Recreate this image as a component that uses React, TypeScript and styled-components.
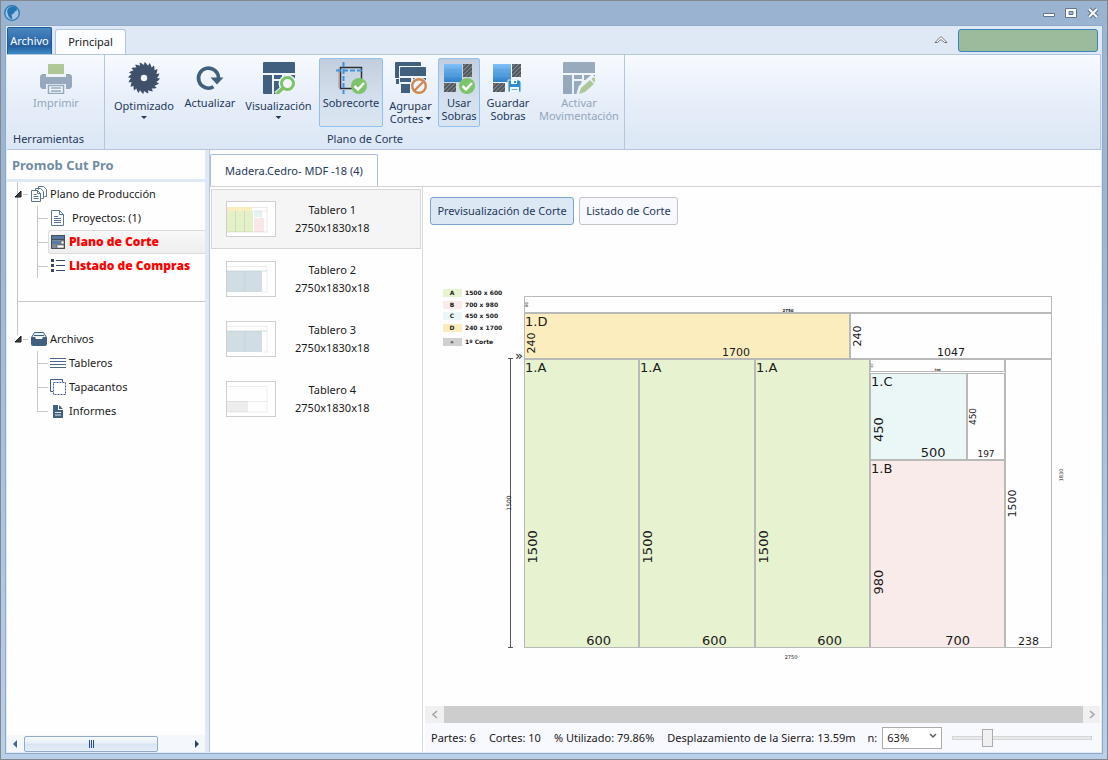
import React from "react";
import styled, { createGlobalStyle, css } from "styled-components";

const GlobalStyle = createGlobalStyle`
  *, *::before, *::after { box-sizing: border-box; }
  body { margin: 0; }
  button, select, input { font: inherit; color: inherit; margin: 0; }
  ul { list-style: none; margin: 0; padding: 0; }
`;

const slate = "#41607f";
const ink = "#1e395b";

/* ---------- window frame ---------- */

const Window = styled.div`
  display: flex;
  flex-direction: column;
  height: 100vh;
  min-height: 480px;
  padding: 0 4px 5px;
  border: 1px solid #828790;
  background: linear-gradient(#9ab3d1, #9db6d4 30%, #bad0e9);
  font-family: "Noto Sans", "Open Sans", sans-serif;
  font-size: 11px;
  line-height: 16px;
  color: #1a1a1a;
`;

const TitleBar = styled.header`
  display: flex;
  align-items: center;
  justify-content: space-between;
  flex: none;
  height: 24px;
  padding: 0 2px 0 0;
`;

const Logo = styled.svg`
  width: 20px;
  height: 20px;
  margin-left: -3px;
`;

const WindowControls = styled.div`
  display: flex;
  gap: 6px;
`;

const PlainButton = styled.button`
  display: flex;
  align-items: center;
  justify-content: center;
  padding: 0;
  border: 0;
  background: none;
`;

const Client = styled.div`
  display: flex;
  flex-direction: column;
  flex: 1;
  min-height: 0;
  padding: 0 1px 1px;
  border: 1px solid #8fa9c9;
  background: #dfe8f5;
`;

/* ---------- ribbon ---------- */

const RibbonTabs = styled.nav`
  display: flex;
  align-items: flex-end;
  flex: none;
  height: 28px;
  padding-right: 3px;
`;

const FileTab = styled.button`
  width: 45px;
  height: 27px;
  padding: 0;
  border: 1px solid #1f5a99;
  border-bottom: 0;
  border-radius: 2px 2px 0 0;
  background: linear-gradient(#4a87c0, #2f6bab 50%, #2560a0 70%, #3d8cc8);
  color: #fff;
`;

const RibbonTab = styled.button`
  width: 71px;
  height: 25px;
  margin: 0 auto 0 3px;
  padding: 0;
  border: 1px solid #b4c6de;
  border-bottom: 0;
  border-radius: 3px 3px 0 0;
  background: #fcfdff;
`;

const CollapseButton = styled(PlainButton)`
  align-self: center;
`;

const StatusBadge = styled.div`
  width: 140px;
  height: 23px;
  margin: 0 0 2px 10px;
  border: 1px solid #3c82bd;
  border-radius: 3px;
  background: #9abc9c;
`;

const Ribbon = styled.section`
  display: flex;
  flex: none;
  height: 96px;
  border: 1px solid #b4c6de;
  border-left: 0;
  background: linear-gradient(#f7faff, #e5edf8 55%, #dce7f5);
`;

const RibbonGroup = styled.div<{ $width: number }>`
  display: flex;
  flex-direction: column;
  justify-content: space-between;
  width: ${(p) => p.$width}px;
  padding: 3px 2px 2px 3px;
  border-right: 1px solid #b4c6de;
`;

const RibbonRow = styled.div`
  display: flex;
  gap: 2px;
`;

const GroupTitle = styled.div<{ $align?: string }>`
  padding: 0 3px;
  text-align: ${(p) => p.$align ?? "center"};
  color: ${ink};
`;

const RibbonButton = styled.button<{ $width: number; $active?: boolean; $split?: boolean }>`
  display: flex;
  flex-direction: column;
  align-items: center;
  gap: ${(p) => (p.$split ? 5 : 2)}px;
  width: ${(p) => p.$width}px;
  height: 69px;
  padding: 3px 0 0;
  border: 1px solid transparent;
  border-radius: 2px;
  background: none;
  line-height: 13px;
  white-space: nowrap;
  color: ${ink};
  ${(p) =>
    p.$active &&
    css`
      border-color: #90c0ee;
      background: linear-gradient(#c2cedd, #d5e0ee 60%, #dae5f2);
    `}
  &:disabled {
    color: #93a6ba;
  }
  &:disabled svg {
    opacity: 0.5;
  }
`;

const ButtonText = styled.span`
  display: flex;
  flex-direction: column;
  align-items: center;
`;

const Caret = styled.i<{ $inline?: boolean }>`
  display: inline-block;
  width: 6px;
  height: 3px;
  margin: ${(p) => (p.$inline ? "0 0 3px 2px" : "4px 0 0")};
  background: ${ink};
  clip-path: polygon(0 0, 100% 0, 50% 100%);
`;

/* ---------- sidebar ---------- */

const Body = styled.div`
  display: flex;
  flex: 1;
  min-height: 0;
  gap: 4px;
`;

const Sidebar = styled.aside`
  display: flex;
  flex-direction: column;
  flex: none;
  width: 198px;
  background: #fefefe;
`;

const SidebarTitle = styled.h1`
  margin: 0;
  padding: 6px 0 5px 5px;
  border-bottom: 3px solid #dfe8f5;
  font-size: 13px;
  line-height: 18px;
  font-weight: 700;
  color: #708ca3;
`;

const Tree = styled.div`
  flex: 1;
  padding-left: 10px;
`;

const TreeSection = styled.section<{ $ruled?: boolean }>`
  ${(p) =>
    p.$ruled
      ? css`
          border-left: 1px solid #c8c8c8;
          border-bottom: 1px solid #c8c8c8;
          padding-bottom: 23px;
        `
      : css`
          padding: 25px 0 0 1px;
          background: linear-gradient(#c8c8c8, #c8c8c8) 0 0 / 1px 33px no-repeat;
        `}
`;

const TreeRoot = styled.button`
  display: flex;
  align-items: center;
  gap: 3px;
  height: 24px;
  margin-left: -4px;
  padding: 0;
  border: 0;
  background: none;
`;

const RootTick = styled.i`
  width: 5px;
  height: 1px;
  background: #c8c8c8;
  margin-left: -2px;
`;

const Branch = styled.ul<{ $last?: boolean }>`
  margin-left: 19px;
  background: linear-gradient(#c8c8c8, #c8c8c8) 0 0 / 1px ${(p) => (p.$last ? "calc(100% - 12px)" : "100%")} no-repeat;
`;

const Leaf = styled.li`
  display: flex;
  align-items: center;
  height: 24px;
  &::before {
    content: "";
    width: 11px;
    height: 1px;
    background: #c8c8c8;
  }
`;

const LeafButton = styled.button<{ $selected?: boolean; $alert?: boolean; $wide?: boolean }>`
  display: flex;
  flex: 1;
  align-items: center;
  gap: ${(p) => (p.$wide ? 6 : 3)}px;
  height: 24px;
  padding: 0 0 0 1px;
  border: 1px solid ${(p) => (p.$selected ? "#dcdcdc" : "transparent")};
  border-right: 0;
  border-radius: 3px 0 0 3px;
  background: ${(p) => (p.$selected ? "linear-gradient(#f8f8f8, #eeeeee)" : "none")};
  white-space: nowrap;
  ${(p) =>
    p.$alert &&
    css`
      color: #ff0000;
      font-family: "Open Sans", sans-serif;
      font-size: 12px;
      font-weight: 800;
    `}
`;

const SideScroll = styled.div`
  display: flex;
  align-items: center;
  height: 17px;
  padding: 0 3px;
  background: #f4f8fd;
`;

const SideScrollThumb = styled.div`
  display: flex;
  align-items: center;
  justify-content: center;
  gap: 1px;
  width: 134px;
  height: 16px;
  margin: 0 auto 0 3px;
  border: 1px solid #93a9c8;
  border-radius: 2px;
  background: linear-gradient(#f7fafe, #e6eef8 45%, #d8e4f2 50%, #e4edf8);
  i {
    width: 1px;
    height: 8px;
    background: #274b84;
  }
`;

/* ---------- main area ---------- */

const Main = styled.main`
  display: flex;
  flex-direction: column;
  flex: 1;
  min-width: 0;
  border-left: 1px solid #b9c7dc;
  background: #fefefe;
`;

const MaterialTabs = styled.div`
  display: flex;
  flex: none;
  height: 37px;
  padding-top: 4px;
  border-bottom: 1px solid #d2d2d2;
`;

const MaterialTab = styled.button`
  width: 168px;
  height: 32px;
  padding: 0;
  border: 1px solid #a9bdda;
  border-bottom: 0;
  border-radius: 2px 2px 0 0;
  background: #fefefe;
  color: ${ink};
`;

const Split = styled.div`
  display: flex;
  flex: 1;
  min-height: 0;
`;

const BoardList = styled.ul`
  flex: none;
  width: 213px;
  padding: 2px 1px 0;
  border-right: 1px solid #dadada;
`;

const BoardCard = styled.button<{ $selected?: boolean }>`
  display: flex;
  align-items: center;
  gap: 19px;
  width: 100%;
  height: 60px;
  padding: 0 0 0 14px;
  border: 1px solid ${(p) => (p.$selected ? "#d6d6d6" : "transparent")};
  background: ${(p) => (p.$selected ? "#f5f5f5" : "none")};
  line-height: 18px;
`;

const Thumb = styled.svg`
  width: 50px;
  height: 36px;
  border: 1px solid #cfcfcf;
  background: #fefefe;
`;

const Viewer = styled.section`
  display: flex;
  flex-direction: column;
  flex: 1;
  min-width: 0;
  padding-right: 1px;
`;

const ViewToggle = styled.div`
  display: flex;
  gap: 5px;
  flex: none;
  padding: 10px 7px 0;
`;

const ToggleButton = styled.button<{ $active?: boolean; $width: number }>`
  width: ${(p) => p.$width}px;
  height: 28px;
  padding: 0;
  border: 1px solid ${(p) => (p.$active ? "#7ba2d0" : "#c3c3c8")};
  border-radius: 3px;
  background: ${(p) => (p.$active ? "#dde8f5" : "#f8f8ff")};
  white-space: nowrap;
  color: ${ink};
`;

const Canvas = styled.div`
  flex: 1;
  min-height: 0;
  overflow: hidden;
  padding: 55px 0 0 12px;
  svg {
    display: block;
    font-family: "DejaVu Sans", sans-serif;
  }
`;

const ViewScroll = styled.div`
  display: flex;
  flex: none;
  height: 17px;
  margin-left: 2px;
  background: #cdcdcd;
`;

const ViewScrollArrow = styled(PlainButton)<{ $end?: boolean }>`
  width: ${(p) => (p.$end ? 17 : 19)}px;
  margin-left: ${(p) => (p.$end ? "auto" : "0")};
  background: #f0f0f0;
`;

const StatusBar = styled.footer`
  display: flex;
  align-items: center;
  flex: none;
  height: 29px;
  margin-left: 2px;
  padding: 0 8px 0 6px;
  background: #f8f8ff;
  white-space: nowrap;
`;

const Stats = styled.div`
  display: flex;
  flex: none;
  gap: 13px;
`;

const ZoomLabel = styled.label`
  margin: 0 5px 0 12px;
`;

const SelectBox = styled.div`
  display: grid;
  flex: none;
  width: 60px;
  height: 22px;
  > * {
    grid-area: 1 / 1;
  }
  svg {
    align-self: center;
    justify-self: end;
    margin: 0 5px 3px 0;
    pointer-events: none;
  }
`;

const ZoomSelect = styled.select`
  appearance: none;
  width: 100%;
  height: 100%;
  padding: 0 4px;
  border: 1px solid #acacac;
  border-radius: 0;
  background: #fff;
`;

const ZoomRange = styled.input`
  appearance: none;
  flex: 1;
  min-width: 60px;
  height: 18px;
  margin-left: 10px;
  background: none;
  &::-webkit-slider-runnable-track {
    height: 4px;
    border: 1px solid #d6d6d6;
    background: #e7eaea;
  }
  &::-webkit-slider-thumb {
    appearance: none;
    width: 11px;
    height: 18px;
    margin-top: -8px;
    border: 1px solid #acacac;
    background: #f0f0f0;
  }
`;

/* ---------- icons ---------- */

const Icon32 = ({ children }: { children: React.ReactNode }) => (
  <svg width="32" height="32" viewBox="0 0 32 32" aria-hidden="true">
    {children}
  </svg>
);

const PrinterIcon = () => (
  <Icon32>
    <path d="M8 2h16v10H8z" fill="#6f9a2e" />
    <path d="M2 12h4v3h20v-3h4l2 2v11l-2 2h-4v-5H6v5H2l-2-2V14z" fill={slate} />
    <path d="M8.500 23.500h15v8h-15z" fill="#fff" stroke={slate} strokeWidth="1.500" />
    <path d="M11 26h10M11 29h10" stroke={slate} strokeWidth="1.500" />
  </Icon32>
);

const sawTeeth = Array.from({ length: 20 }, (_, i) => {
  const at = (deg: number, r: number) => {
    const a = (deg * Math.PI) / 180;
    return `${(16 + r * Math.cos(a)).toFixed(2)},${(16 + r * Math.sin(a)).toFixed(2)}`;
  };
  return `${at(i * 18, 13)} ${at(i * 18 + 2, 16)} ${at(i * 18 + 8, 15)}`;
}).join(" ");

const SawIcon = () => (
  <Icon32>
    <polygon points={sawTeeth} fill="#3f506b" />
    <circle cx="16" cy="16" r="3.200" fill="#f2f6fc" />
  </Icon32>
);

const RefreshIcon = () => (
  <Icon32>
    <path d="M19.500 24.800A10 10 0 1 1 24.500 16" fill="none" stroke={slate} strokeWidth="3.600" />
    <path d="M16.500 15.500h13L23 22.500z" fill={slate} />
  </Icon32>
);

const PanelsShape = () => (
  <path d="M0 1q0-1 1-1h30q1 0 1 1v10H0zM0 13h9v19H1q-1 0-1-1zM11 13h8v4h-8zM21 13h11v5H21zM11 19h8l-2 5v8h-6z" fill={slate} />
);

const VisualIcon = () => (
  <Icon32>
    <PanelsShape />
    <circle cx="24.500" cy="21.500" r="6" fill="#eef4fb" stroke="#eef4fb" strokeWidth="6" />
    <path d="M20 26l-7 6" stroke="#eef4fb" strokeWidth="5" />
    <circle cx="24.500" cy="21.500" r="6" fill="#f2f6fc" stroke="#7dc369" strokeWidth="3" />
    <path d="M20 26l-6.500 6" stroke="#7dc369" strokeWidth="3.500" />
  </Icon32>
);

const Check = () => (
  <>
    <circle cx="24" cy="24" r="8" fill="#7dc369" />
    <path d="M19.500 24l3.500 3.500 6-6.500" fill="none" stroke="#fff" strokeWidth="2.500" />
  </>
);

const OvercutIcon = () => (
  <Icon32>
    <path d="M5.500 5.500h21v21h-21z" fill="none" stroke="#2d3035" strokeWidth="1.500" />
    <path d="M4 6v20" stroke="#b98f95" strokeWidth="1" />
    <path d="M8.500 0v32M1 8.500h28" stroke="#3e92dc" strokeWidth="2" strokeDasharray="5 2" />
    <Check />
  </Icon32>
);

const GroupIcon = () => (
  <Icon32>
    <path d="M0 1q0-1 1-1h24q1 0 1 1v3H4v12H0zM1 17h3v5H1z" fill={slate} />
    <path d="M5 6q0-1 1-1h24q1 0 1 1v8H5zM5 16h11v4H5zM18 16h13v4H18zM6 22h9v9H6z" fill={slate} />
    <circle cx="24" cy="24" r="8" fill="#edf3fb" stroke="#edf3fb" strokeWidth="2" />
    <circle cx="24" cy="24" r="6.800" fill="none" stroke="#cf8752" strokeWidth="2.400" />
    <path d="M19.500 28.500l9-9" stroke="#cf8752" strokeWidth="2.400" />
  </Icon32>
);

const Scrap = ({ id }: { id: string }) => (
  <>
    <defs>
      <linearGradient id={`${id}-blue`} x1="0" y1="0" x2="0" y2="1">
        <stop offset="0" stopColor="#7fc1f8" />
        <stop offset="1" stopColor="#2f80c8" />
      </linearGradient>
      <pattern id={`${id}-hatch`} width="3" height="3" patternUnits="userSpaceOnUse" patternTransform="rotate(45)">
        <rect width="3" height="3" fill="#868b92" />
        <rect width="2" height="3" fill="#50545b" />
      </pattern>
    </defs>
    <rect x="1" y="2" width="18" height="18" fill={`url(#${id}-blue)`} />
    <path d="M1 8h18M1 14h18" stroke="#5aa2e0" strokeWidth=".8" />
    <path d="M20 2h9v13h-9zM1 21h12v9H1z" fill={`url(#${id}-hatch)`} />
  </>
);

const UseScrapIcon = () => (
  <Icon32>
    <Scrap id="use" />
    <Check />
  </Icon32>
);

const SaveScrapIcon = () => (
  <Icon32>
    <Scrap id="save" />
    <path d="M16 18h11l2 2v10H16z" fill="#2f8fd3" stroke="#dfe9f5" />
    <path d="M19 18h6v4h-6zM18 25h9v5h-9z" fill="#f3f8fd" />
    <path d="M22 19h2v2h-2z" fill="#2f8fd3" />
    <path d="M19.500 27.500h6" stroke="#8aa" />
  </Icon32>
);

const MoveIcon = () => (
  <Icon32>
    <PanelsShape />
    <path d="M15 32l2-7L29 14l4 4-12 11z" fill="#edf3fb" stroke="#edf3fb" strokeWidth="3" />
    <path d="M16 32l2-6 9-8 4 4-9 8zM28.500 17l1.500-1.500 2 .5v3.500l-1 1z" fill="#6fa038" />
  </Icon32>
);

const TreeIcon = ({ children }: { children: React.ReactNode }) => (
  <svg width="16" height="16" viewBox="0 0 16 16" aria-hidden="true" fill="none" stroke="#5b7794">
    {children}
  </svg>
);

const Expander = () => (
  <svg width="8" height="8" viewBox="0 0 8 8" aria-hidden="true">
    <path d="M7 1v6H1z" fill="#404040" stroke="#1a1a1a" />
  </svg>
);

const Arrow = ({ d, w, h, fill, stroke }: { d: string; w: number; h: number; fill?: string; stroke?: string }) => (
  <svg width={w} height={h} viewBox={`0 0 ${w} ${h}`} aria-hidden="true">
    <path d={d} fill={fill ?? "none"} stroke={stroke ?? "none"} strokeWidth="1.500" />
  </svg>
);

/* ---------- cutting plan ---------- */

type Part = {
  x: number;
  y: number;
  w: number;
  h: number;
  wide?: string;
  tall?: string;
  size: number;
  name?: string;
  fill?: string;
};

const green = "#e7f2d0";
const pink = "#f9ebe9";
const aqua = "#ebf7f6";
const amber = "#fcedbf";

const parts: Part[] = [
  { x: 89, y: 16, w: 528, h: 17, wide: "2750", tall: "80", size: 4 },
  { x: 89, y: 33, w: 326, h: 46, wide: "1700", tall: "240", size: 11, name: "1.D", fill: amber },
  { x: 415, y: 33, w: 202, h: 46, wide: "1047", tall: "240", size: 11 },
  { x: 89, y: 79, w: 115, h: 289, wide: "600", tall: "1500", size: 13, name: "1.A", fill: green },
  { x: 204, y: 79, w: 116, h: 289, wide: "600", tall: "1500", size: 13, name: "1.A", fill: green },
  { x: 320, y: 79, w: 115, h: 289, wide: "600", tall: "1500", size: 13, name: "1.A", fill: green },
  { x: 435, y: 79, w: 135, h: 13, wide: "700", tall: "60", size: 3 },
  { x: 435, y: 93, w: 97, h: 87, wide: "500", tall: "450", size: 13, name: "1.C", fill: aqua },
  { x: 532, y: 93, w: 38, h: 87, wide: "197", tall: "450", size: 9 },
  { x: 435, y: 180, w: 135, h: 188, wide: "700", tall: "980", size: 13, name: "1.B", fill: pink },
  { x: 570, y: 79, w: 47, h: 289, wide: "238", tall: "1500", size: 11 },
];

const legend = [
  { y: 9, key: "A", text: "1500 x 600", fill: green },
  { y: 21, key: "B", text: "700 x 980", fill: pink },
  { y: 32, key: "C", text: "450 x 500", fill: aqua },
  { y: 44, key: "D", text: "240 x 1700", fill: amber },
  { y: 58, key: "»", text: "1º Corte", fill: "#d0d0d0" },
];

const Upright = ({ x, y, size, children }: { x: number; y: number; size: number; children: React.ReactNode }) => (
  <text transform={`translate(${x} ${y}) rotate(-90)`} fontSize={size} textAnchor="middle">
    {children}
  </text>
);

const CuttingPlan = () => (
  <svg width="650" height="390" viewBox="0 0 650 390" role="img" aria-label="Plano de corte Tablero 1" fill="#1a1a1a">
    {legend.map((l) => (
      <g key={l.key} fontSize="6">
        <rect x="8" y={l.y} width="19" height="8" fill={l.fill} />
        <text x="17" y={l.y + 6} textAnchor="middle" fontWeight="700">
          {l.key}
        </text>
        <text x="30" y={l.y + 6} fontWeight="700">
          {l.text}
        </text>
      </g>
    ))}
    {parts.map((p) => {
      const ratio = p.name ? 0.65 : 0.5;
      return (
        <g key={`${p.x}-${p.y}`}>
          <rect x={p.x + 0.5} y={p.y + 0.5} width={p.w - 1} height={p.h - 1} fill={p.fill ?? "#fefefe"} stroke="#b9bab8" />
          {p.name && (
            <text x={p.x + 1} y={p.y + 13} fontSize="13">
              {p.name}
            </text>
          )}
          <text
            x={p.x + p.w * ratio}
            y={p.y + p.h - (p.size > 4 ? 3 : 1)}
            fontSize={p.size}
            fontWeight={p.size > 4 ? 400 : 700}
            textAnchor="middle"
          >
            {p.wide}
          </text>
          <Upright x={p.x + p.size} y={p.y + p.h * ratio} size={p.size}>
            {p.tall}
          </Upright>
        </g>
      );
    })}
    <path d="M75.500 78v290M73 78.500h5M73 367.500h5" stroke="#55555a" fill="none" />
    <text x="80" y="80" fontSize="13">
      »
    </text>
    <Upright x={76} y={223} size={6}>
      1500
    </Upright>
    <Upright x={628} y={195} size={5}>
      1830
    </Upright>
    <text x="356" y="379" fontSize="5" textAnchor="middle">
      2750
    </text>
  </svg>
);

/* ---------- board thumbnails ---------- */

const boards = [
  {
    name: "Tablero 1",
    art: (
      <>
        <path d="M0 5h25v4H0z" fill={amber} />
        <path d="M0 9h26v21H0z" fill="#e4f0c8" />
        <path d="M27 9h7v6h-7z" fill="#e4f4f4" />
        <path d="M27 16h10v14H27z" fill="#f9e6e6" />
        <path d="M8.500 9v21M17.500 9v21M25 5.500h15M40 5v25M34.500 9v7M26.500 9H40M0 30h40" stroke="#0002" fill="none" strokeWidth=".6" />
      </>
    ),
  },
  { name: "Tablero 2", art: null },
  { name: "Tablero 3", art: null },
  {
    name: "Tablero 4",
    art: (
      <>
        <path d="M0 19h21v11H0z" fill="#ededed" />
        <path d="M0 4.500h40V30M0 19.500h40M0 30h40" stroke="#0001" fill="none" />
      </>
    ),
  },
];

const TwoPanelArt = () => (
  <>
    <path d="M0 9h35v21H0z" fill="#d0dee3" />
    <path d="M18 9v21M0 9h40" stroke="#bccdd3" strokeWidth=".6" />
    <path d="M0 4.500h40V30H35" stroke="#0001" fill="none" />
  </>
);

export default function App() {
  return (
    <>
      <GlobalStyle />
      <Window>
        <TitleBar>
          <Logo viewBox="0 0 20 20" aria-label="Promob">
            <circle cx="10" cy="10" r="7.300" fill="#a5c4e2" stroke="#2474b4" strokeWidth="1.300" />
            <path d="M5 8l1.500-3 3-1.500h3l2.500 2-.5 2.500-2 .5v1.500l-2 1-1 1.500 1 3-1.500.5-2-2-1-2z" fill="#2474b4" />
          </Logo>
          <WindowControls>
            <PlainButton aria-label="Minimizar">
              <svg width="16" height="14" viewBox="0 0 16 14">
                <path d="M2.500 7.500h11v3h-11z" fill="#fff" stroke="#5f7695" />
              </svg>
            </PlainButton>
            <PlainButton aria-label="Maximizar">
              <svg width="16" height="14" viewBox="0 0 16 14">
                <path d="M2.500 2.500h11v9h-11zM6 5.500h4v3H6z" fill="#fff" fillRule="evenodd" stroke="#5f7695" />
              </svg>
            </PlainButton>
            <PlainButton aria-label="Cerrar">
              <svg width="16" height="14" viewBox="0 0 16 14">
                <path d="M4 3l8 8M12 3l-8 8" stroke="#5f7695" strokeWidth="4" />
                <path d="M4 3l8 8M12 3l-8 8" stroke="#fff" strokeWidth="2" />
              </svg>
            </PlainButton>
          </WindowControls>
        </TitleBar>

        <Client>
          <RibbonTabs>
            <FileTab>Archivo</FileTab>
            <RibbonTab>Principal</RibbonTab>
            <CollapseButton aria-label="Contraer la cinta">
              <svg width="14" height="12" viewBox="0 0 14 12">
                <path d="M1 8.500L7 2.500l6 6h-2.500L7 5.500 3.500 8.500z" fill="#fff" stroke="#6d7276" />
              </svg>
            </CollapseButton>
            <StatusBadge />
          </RibbonTabs>

          <Ribbon>
            <RibbonGroup $width={98}>
              <RibbonRow>
                <RibbonButton $width={94} disabled>
                  <PrinterIcon />
                  Imprimir
                </RibbonButton>
              </RibbonRow>
              <GroupTitle $align="left">Herramientas</GroupTitle>
            </RibbonGroup>
            <RibbonGroup $width={520}>
              <RibbonRow>
                <RibbonButton $width={72} $split>
                  <SawIcon />
                  <ButtonText>
                    Optimizado
                    <Caret />
                  </ButtonText>
                </RibbonButton>
                <RibbonButton $width={56}>
                  <RefreshIcon />
                  Actualizar
                </RibbonButton>
                <RibbonButton $width={77} $split>
                  <VisualIcon />
                  <ButtonText>
                    Visualización
                    <Caret />
                  </ButtonText>
                </RibbonButton>
                <RibbonButton $width={64} $active>
                  <OvercutIcon />
                  Sobrecorte
                </RibbonButton>
                <RibbonButton $width={51} $split>
                  <GroupIcon />
                  <ButtonText>
                    Agrupar
                    <span>
                      Cortes
                      <Caret $inline />
                    </span>
                  </ButtonText>
                </RibbonButton>
                <RibbonButton $width={42} $active>
                  <UseScrapIcon />
                  <ButtonText>
                    <span>Usar</span>
                    <span>Sobras</span>
                  </ButtonText>
                </RibbonButton>
                <RibbonButton $width={52}>
                  <SaveScrapIcon />
                  <ButtonText>
                    <span>Guardar</span>
                    <span>Sobras</span>
                  </ButtonText>
                </RibbonButton>
                <RibbonButton $width={86} disabled>
                  <MoveIcon />
                  <ButtonText>
                    <span>Activar</span>
                    <span>Movimentación</span>
                  </ButtonText>
                </RibbonButton>
              </RibbonRow>
              <GroupTitle>Plano de Corte</GroupTitle>
            </RibbonGroup>
          </Ribbon>

          <Body>
            <Sidebar>
              <SidebarTitle>Promob Cut Pro</SidebarTitle>
              <Tree>
                <TreeSection $ruled>
                  <TreeRoot>
                    <Expander />
                    <RootTick />
                    <TreeIcon>
                      <path d="M7.500 3.500v-3h5l3 3v7h-2M4.500 4.500v-2h5l3 3v7h-2" fill="#fefefe" />
                      <path d="M.5 4.500h6l3 3v8h-9zM6.500 4.500v3h3M2.500 8.500h3M2.500 10.500h5M2.500 12.500h5" fill="#fefefe" />
                    </TreeIcon>
                    Plano de Producción
                  </TreeRoot>
                  <Branch>
                    <Leaf>
                      <LeafButton $wide>
                        <TreeIcon>
                          <path d="M1.500 .5h8l4 4v11h-12zM9.500 .5v4h4M4 6.500h4M4 8.500h7M4 10.500h7M4 12.500h7" />
                        </TreeIcon>
                        Proyectos: (1)
                      </LeafButton>
                    </Leaf>
                    <Leaf>
                      <LeafButton $selected $alert>
                        <TreeIcon>
                          <path d="M1 1h14v14H1z" fill="#7f8a96" stroke="none" />
                          <path d="M1.500 1.500h13v4h-13z" fill="#5378a5" stroke="#474d55" />
                          <path d="M2 7h8v3H2z" fill="#567ba7" stroke="none" />
                          <path d="M11 7h3v3h-3zM7 11h7v3H7z" fill="#fff" stroke="#474d55" strokeWidth=".6" />
                          <path d="M1.500 1.500h13v13h-13z" stroke="#474d55" />
                        </TreeIcon>
                        Plano de Corte
                      </LeafButton>
                    </Leaf>
                    <Leaf>
                      <LeafButton $alert>
                        <TreeIcon>
                          <path d="M1 1h3v3H1zM1 6h3v3H1zM1 11h3v3H1z" fill="#33496a" stroke="none" />
                          <path d="M6 2.500h9M6 7.500h9M6 12.500h9" stroke="#33496a" />
                        </TreeIcon>
                        Listado de Compras
                      </LeafButton>
                    </Leaf>
                  </Branch>
                </TreeSection>
                <TreeSection>
                  <TreeRoot>
                    <Expander />
                    <RootTick />
                    <TreeIcon>
                      <path d="M.5 6.500L3.500 1.500h9l3 5" fill="#e8eff6" stroke={slate} />
                      <path d="M0 6h4l1 2h6l1-2h4v7q0 2-2 2H2q-2 0-2-2z" fill={slate} stroke="none" />
                      <path d="M3 4.500h10" stroke={slate} />
                    </TreeIcon>
                    Archivos
                  </TreeRoot>
                  <Branch $last>
                    <Leaf>
                      <LeafButton>
                        <TreeIcon>
                          <path d="M0 3.500h16M0 6.500h16M0 9.500h16M0 12.500h16" stroke="#4c668f" />
                        </TreeIcon>
                        Tableros
                      </LeafButton>
                    </Leaf>
                    <Leaf>
                      <LeafButton>
                        <TreeIcon>
                          <path d="M3 12.500H.5V.5h12V3" stroke="#3f5d86" />
                          <path d="M3.500 3.500h12v12h-12z" stroke="#3f5d86" strokeDasharray="2 1" />
                        </TreeIcon>
                        Tapacantos
                      </LeafButton>
                    </Leaf>
                    <Leaf>
                      <LeafButton>
                        <TreeIcon>
                          <path d="M3 2h5v5h5v8H3z" fill={slate} stroke="none" />
                          <path d="M9 2l4 4H9z" fill={slate} stroke="none" />
                          <path d="M5 9.500h6M5 12h6" stroke="#dbe5ef" />
                        </TreeIcon>
                        Informes
                      </LeafButton>
                    </Leaf>
                  </Branch>
                </TreeSection>
              </Tree>
              <SideScroll>
                <PlainButton aria-label="Desplazar a la izquierda">
                  <Arrow w={11} h={10} d="M7 1v8L3 5z" fill="#44658f" />
                </PlainButton>
                <SideScrollThumb>
                  <i />
                  <i />
                  <i />
                </SideScrollThumb>
                <PlainButton aria-label="Desplazar a la derecha">
                  <Arrow w={11} h={10} d="M4 1v8l4-4z" fill="#274766" />
                </PlainButton>
              </SideScroll>
            </Sidebar>

            <Main>
              <MaterialTabs>
                <MaterialTab>Madera.Cedro- MDF -18 (4)</MaterialTab>
              </MaterialTabs>
              <Split>
                <BoardList>
                  {boards.map((b, i) => (
                    <li key={b.name}>
                      <BoardCard $selected={i === 0}>
                        <Thumb viewBox="0 0 48 34" aria-hidden="true">
                          {b.art ?? <TwoPanelArt />}
                        </Thumb>
                        <span>
                          {b.name}
                          <br />
                          2750x1830x18
                        </span>
                      </BoardCard>
                    </li>
                  ))}
                </BoardList>
                <Viewer>
                  <ViewToggle>
                    <ToggleButton $active $width={144}>
                      Previsualización de Corte
                    </ToggleButton>
                    <ToggleButton $width={99}>Listado de Corte</ToggleButton>
                  </ViewToggle>
                  <Canvas>
                    <CuttingPlan />
                  </Canvas>
                  <ViewScroll>
                    <ViewScrollArrow aria-label="Izquierda">
                      <Arrow w={8} h={9} d="M6 1L2 4.500 6 8" stroke="#a3a3a3" />
                    </ViewScrollArrow>
                    <ViewScrollArrow $end aria-label="Derecha">
                      <Arrow w={8} h={9} d="M2 1l4 3.500L2 8" stroke="#a3a3a3" />
                    </ViewScrollArrow>
                  </ViewScroll>
                  <StatusBar>
                    <Stats>
                      <span>Partes: 6</span>
                      <span>Cortes: 10</span>
                      <span>% Utilizado: 79.86%</span>
                      <span>Desplazamiento de la Sierra: 13.59m</span>
                    </Stats>
                    <ZoomLabel htmlFor="zoom">n:</ZoomLabel>
                    <SelectBox>
                      <ZoomSelect id="zoom" defaultValue="63%">
                        <option>63%</option>
                        <option>100%</option>
                      </ZoomSelect>
                      <Arrow w={8} h={6} d="M1 1l3 3 3-3" stroke="#606060" />
                    </SelectBox>
                    <ZoomRange type="range" aria-label="Zoom" min={0} max={280} defaultValue={63} />
                  </StatusBar>
                </Viewer>
              </Split>
            </Main>
          </Body>
        </Client>
      </Window>
    </>
  );
}
